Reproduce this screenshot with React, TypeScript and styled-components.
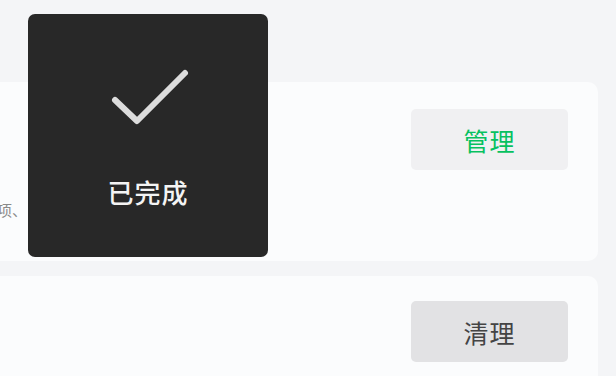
import React from "react";
import styled, { createGlobalStyle } from "styled-components";

const Global = createGlobalStyle`
  html, body { margin: 0; padding: 0; background: #f3f4f6; }
  body { font-family: "Noto Sans CJK SC", "Noto Sans", sans-serif; overflow: hidden; }
`;

const Page = styled.div`
  position: relative;
  width: 616px;
  height: 376px;
  overflow: hidden;
  background: #f4f5f7;
  display: flex;
  flex-direction: column;
  gap: 15px;
  padding: 82px 18px 0 0;
  box-sizing: border-box;
`;

const Card = styled.div<{ $h: number; $top: number }>`
  flex: none;
  height: ${(p) => p.$h}px;
  margin-left: -12px;
  background: #fbfcfd;
  border-radius: 10px;
  display: flex;
  align-items: flex-start;
  justify-content: space-between;
  padding: ${(p) => p.$top}px 30px 0 9px;
  box-sizing: border-box;
`;

const Info = styled.div`
  flex: 1;
  display: flex;
  flex-direction: column;
  padding-top: 90px;
`;

const Desc = styled.div`
  font-size: 15px;
  line-height: 22px;
  color: #8a8a8a;
`;

const Button = styled.div<{ $green?: boolean }>`
  width: 157px;
  height: 61px;
  border-radius: 5px;
  display: flex;
  align-items: center;
  justify-content: center;
  font-size: 25px;
  letter-spacing: 1px;
  background: ${(p) => (p.$green ? "#f0f0f2" : "#e2e2e4")};
  color: ${(p) => (p.$green ? "#07c160" : "#444444")};
`;

const Toast = styled.div`
  position: absolute;
  left: 28px;
  top: 14px;
  width: 240px;
  height: 243px;
  border-radius: 7px;
  background: #282828;
  display: flex;
  flex-direction: column;
  align-items: center;
`;

const Check = styled.svg`
  margin-top: 44px;
  width: 90px;
  height: 70px;
`;

const ToastText = styled.div`
  margin-top: 46px;
  color: #f4f4f4;
  font-size: 26px;
  line-height: 36px;
  font-weight: 500;
  letter-spacing: 1px;
`;

export default function App() {
  return (
    <>
      <Global />
      <Page>
        <Card $h={179} $top={27}>
          <Info>
            <Desc>项、</Desc>
          </Info>
          <Button $green>管理</Button>
        </Card>
        <Card $h={140} $top={25}>
          <Info />
          <Button>清理</Button>
        </Card>
        <Toast>
          <Check viewBox="0 0 90 70">
            <polyline
              points="12,42 34,63 82,15"
              fill="none"
              stroke="#dcdcdc"
              strokeWidth="6"
              strokeLinecap="round"
              strokeLinejoin="round"
            />
          </Check>
          <ToastText>已完成</ToastText>
        </Toast>
      </Page>
    </>
  );
}
